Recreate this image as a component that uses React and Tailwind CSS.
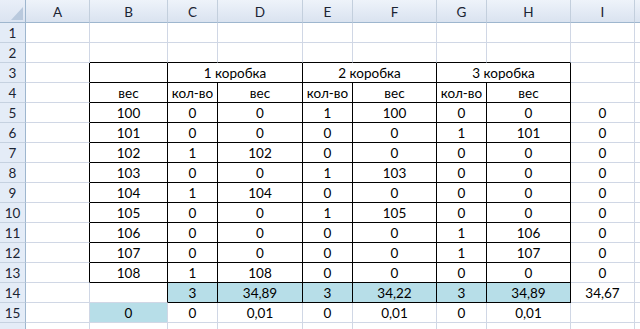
import React from 'react';

const COLS = ['A', 'B', 'C', 'D', 'E', 'F', 'G', 'H', 'I', ''];
const GRID = '#d0d7e5';
const FILL = '#b7dee8';

// cell values by row; index 0 = column A
const data = {
  3: ['', '', '1 коробка', null, '2 коробка', null, '3 коробка', null, '', ''],
  4: ['', 'вес', 'кол-во', 'вес', 'кол-во', 'вес', 'кол-во', 'вес', '', ''],
  5: ['', '100', '0', '0', '1', '100', '0', '0', '0', ''],
  6: ['', '101', '0', '0', '0', '0', '1', '101', '0', ''],
  7: ['', '102', '1', '102', '0', '0', '0', '0', '0', ''],
  8: ['', '103', '0', '0', '1', '103', '0', '0', '0', ''],
  9: ['', '104', '1', '104', '0', '0', '0', '0', '0', ''],
  10: ['', '105', '0', '0', '1', '105', '0', '0', '0', ''],
  11: ['', '106', '0', '0', '0', '0', '1', '106', '0', ''],
  12: ['', '107', '0', '0', '0', '0', '1', '107', '0', ''],
  13: ['', '108', '1', '108', '0', '0', '0', '0', '0', ''],
  14: ['', '', '3', '34,89', '3', '34,22', '3', '34,89', '34,67', ''],
  15: ['', '0', '0', '0,01', '0', '0,01', '0', '0,01', '', ''],
};

// bordered cells: rows 3-13 B..H, row 14 C..H (c index: A=0)
const boxed = (r, c) => {
  if (r >= 3 && r <= 13 && c >= 1 && c <= 7) return true;
  if (r === 14 && c >= 2 && c <= 7) return true;
  return false;
};
const filled = (r, c) => (r === 14 && c >= 2 && c <= 7) || (r === 15 && c === 1);

const Corner = () => (
  <div className="h-full border-r border-b border-[#9eb6ce] bg-gradient-to-b from-[#e9eff8] to-[#dbe4f1] flex items-end justify-end pr-[2px] pb-[2px]">
    <svg width="12" height="13" viewBox="0 0 12 13">
      <polygon points="12,0 12,13 0,13" fill="#b9c9dd" />
    </svg>
  </div>
);

const Cell = ({ r, c, span, text }) => {
  const lastC = c + (span - 1);
  const rightBlack = boxed(r, lastC) || boxed(r, lastC + 1);
  const bottomBlack = boxed(r, c) || boxed(r + 1, c);
  const fill = filled(r, c);
  const rc = rightBlack ? '#000' : fill && filled(r, lastC + 1) ? FILL : GRID;
  const bc = bottomBlack ? '#000' : fill && filled(r + 1, c) ? FILL : GRID;
  return (
    <div
      className={`flex items-center justify-center pt-[1px] border-r border-b whitespace-nowrap ${span === 2 ? 'col-span-2' : ''}`}
      style={{ borderRightColor: rc, borderBottomColor: bc, background: fill ? FILL : '#fff' }}
    >
      {text}
    </div>
  );
};

export default function App() {
  const rows = [];
  for (let r = 1; r <= 16; r++) {
    const vals = data[r] || Array(10).fill('');
    rows.push(
      <div key={`h${r}`} className="flex items-center justify-center pt-[1px] bg-[#e4ecf7] border-r border-r-[#9eb6ce] border-b border-b-[#c5d1e0] text-[#1b2433]">
        {r < 16 ? r : ''}
      </div>
    );
    for (let c = 0; c < 10; c++) {
      const v = vals[c];
      if (v === null) continue;
      const span = r === 3 && (c === 2 || c === 4 || c === 6) ? 2 : 1;
      rows.push(<Cell key={`${r}-${c}`} r={r} c={c} span={span} text={v} />);
    }
  }

  return (
    <div className="w-[640px] h-[329px] overflow-hidden bg-white text-[13.5px] text-black" style={{ fontFamily: 'Lato, "Open Sans", sans-serif' }}>
      <div className="grid grid-cols-[26px_64px_78px_50px_85px_50px_84px_50px_84px_64px_64px] grid-rows-[23px_repeat(16,20px)]">
        <Corner />
        {COLS.map((l, i) => (
          <div key={i} className="flex items-center justify-center pt-[2px] bg-gradient-to-b from-[#eef3fa] to-[#dae3f0] border-r border-r-[#c3cfdd] border-b border-b-[#9eb6ce] text-[#1b2433]">
            {l}
          </div>
        ))}
        {rows}
      </div>
    </div>
  );
}
